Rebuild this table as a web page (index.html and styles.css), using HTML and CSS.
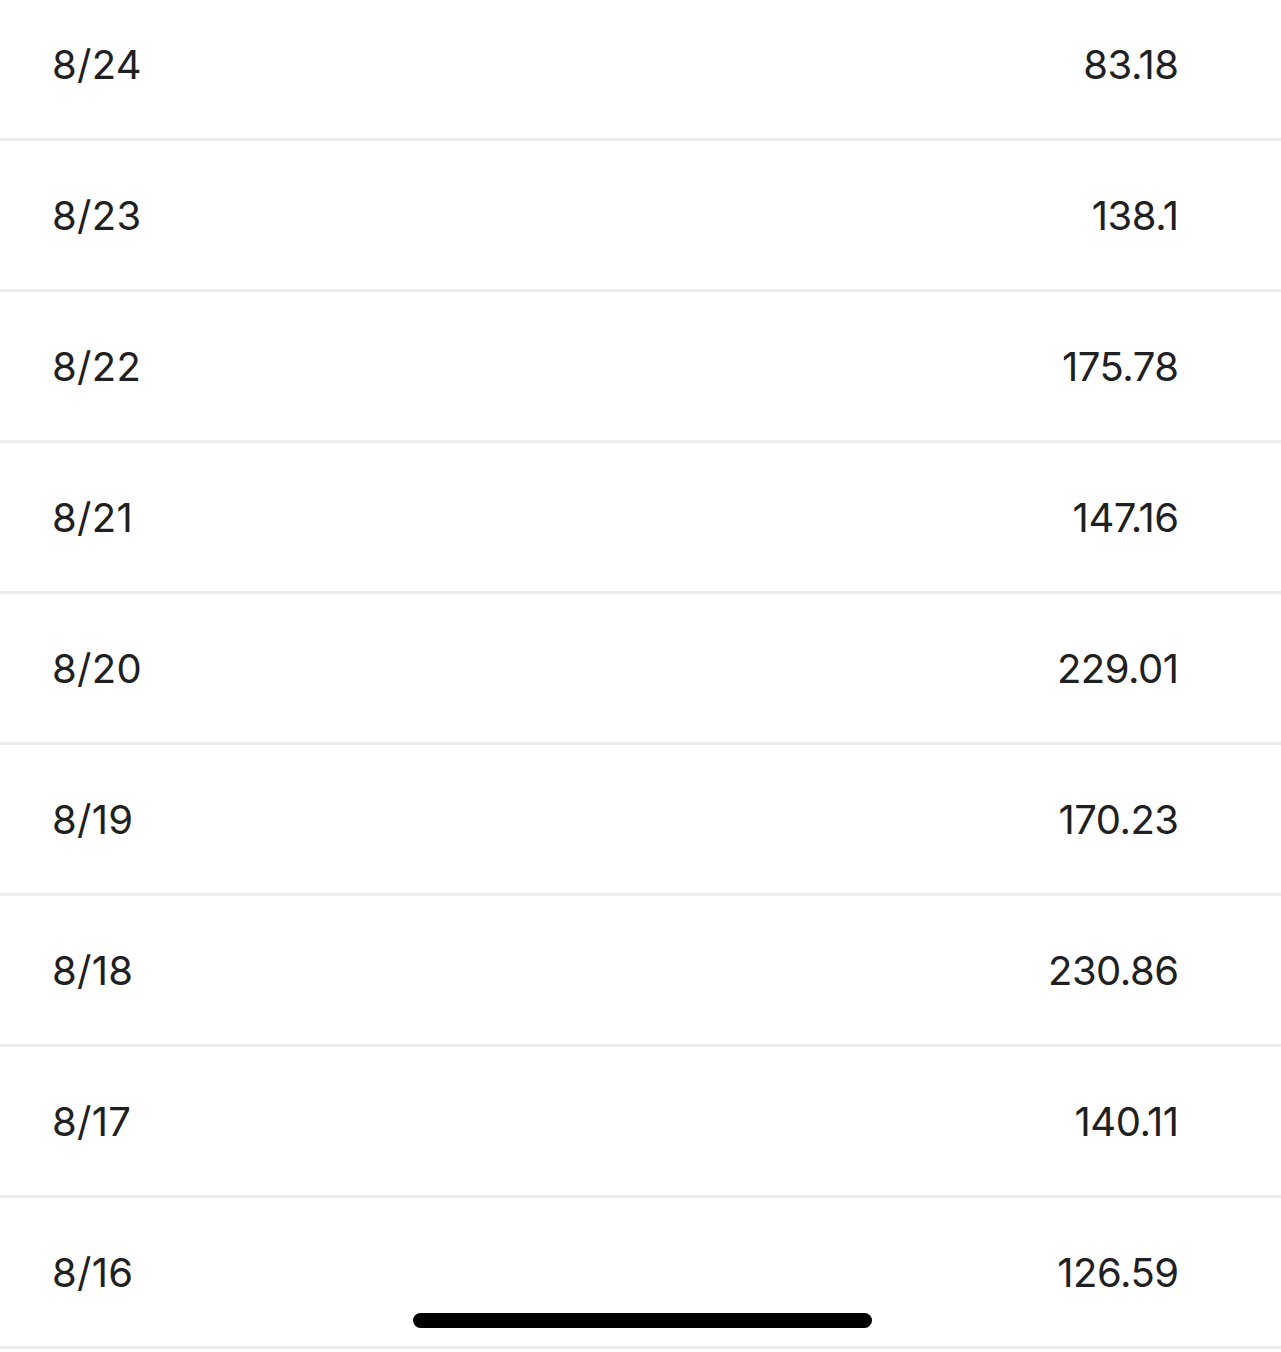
FILE: index.html
```html
<!DOCTYPE html>
<html>
<head>
<meta charset="utf-8">
<link rel="stylesheet" href="styles.css">
</head>
<body>
<div class="list">
  <div class="row"><span class="date">8/24</span><span class="value">83.18</span></div>
  <div class="row"><span class="date">8/23</span><span class="value">138.1</span></div>
  <div class="row"><span class="date">8/22</span><span class="value">175.78</span></div>
  <div class="row"><span class="date">8/21</span><span class="value">147.16</span></div>
  <div class="row"><span class="date">8/20</span><span class="value">229.01</span></div>
  <div class="row"><span class="date">8/19</span><span class="value">170.23</span></div>
  <div class="row"><span class="date">8/18</span><span class="value">230.86</span></div>
  <div class="row"><span class="date">8/17</span><span class="value">140.11</span></div>
  <div class="row"><span class="date">8/16</span><span class="value">126.59</span></div>
</div>
<div class="home-indicator"></div>
</body>
</html>
```
FILE: styles.css
```css
html, body {
  margin: 0;
  padding: 0;
  background: #ffffff;
  overflow: hidden;
}
body {
  width: 1281px;
  height: 1352px;
  position: relative;
  font-family: Inter, "Liberation Sans", sans-serif;
  color: #1f2021;
}
.list {
  margin-top: -10px;
}
.row {
  height: 148px;
  box-sizing: content-box;
  border-bottom: 3px solid #eceef0;
  display: flex;
  align-items: center;
  justify-content: space-between;
  padding: 0 103px 0 52px;
  font-size: 40px;
  line-height: 1;
}
.date,
.value {
  padding-top: 2px;
}
.date {
  letter-spacing: 0.3px;
}
.value {
  letter-spacing: -0.5px;
  margin-right: -0.5px;
}
.home-indicator {
  position: absolute;
  left: 413px;
  top: 1313px;
  width: 459px;
  height: 15px;
  border-radius: 8px;
  background: #000;
}
```
